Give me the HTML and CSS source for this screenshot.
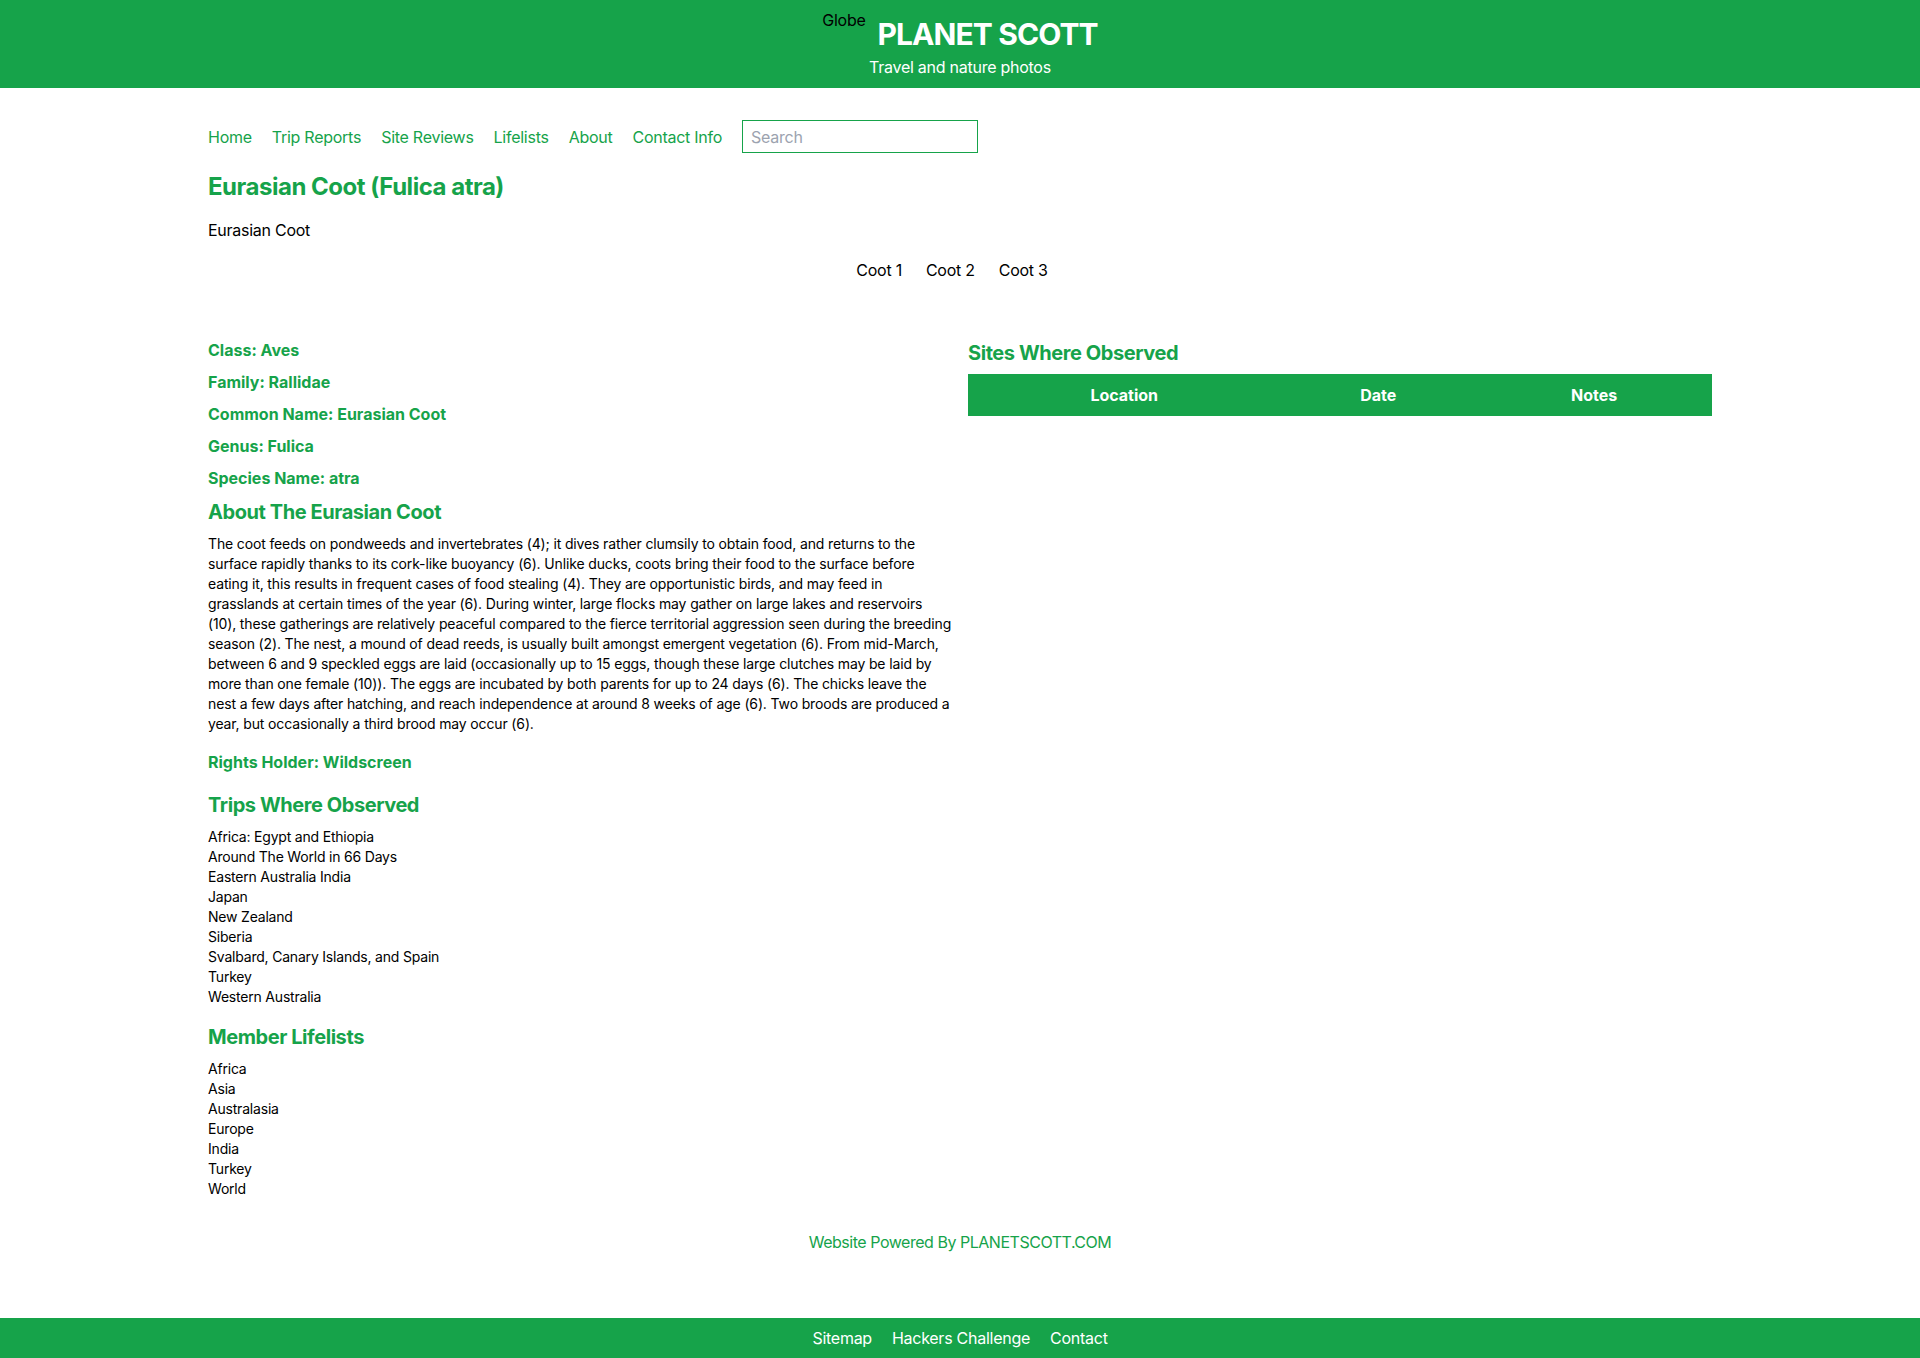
FILE: index.html
```html
<!DOCTYPE html>
<html lang="en">
<head>
<meta charset="utf-8">
<title>Eurasian Coot (Fulica atra) - Planet Scott</title>
<link rel="stylesheet" href="styles.css">
</head>
<body>
<header class="site-header">
  <div class="brand">
    <span class="globe">Globe</span>
    <h1 class="brand-title">PLANET SCOTT</h1>
  </div>
  <p class="tagline">Travel and nature photos</p>
</header>

<main class="container">
  <nav class="main-nav">
    <a href="#">Home</a>
    <a href="#">Trip Reports</a>
    <a href="#">Site Reviews</a>
    <a href="#">Lifelists</a>
    <a href="#">About</a>
    <a href="#">Contact Info</a>
    <input class="search" type="text" placeholder="Search">
  </nav>

  <h2 class="page-title">Eurasian Coot (Fulica atra)</h2>
  <p class="common">Eurasian Coot</p>

  <div class="photos">
    <span>Coot 1</span>
    <span>Coot 2</span>
    <span>Coot 3</span>
  </div>

  <div class="columns">
    <section class="left">
      <div class="facts">
        <p>Class: Aves</p>
        <p>Family: Rallidae</p>
        <p>Common Name: Eurasian Coot</p>
        <p>Genus: Fulica</p>
        <p>Species Name: atra</p>
      </div>
      <h3 class="sub">About The Eurasian Coot</h3>
      <p class="about">The coot feeds on pondweeds and invertebrates (4); it dives rather clumsily to obtain food, and returns to the surface rapidly thanks to its cork-like buoyancy (6). Unlike ducks, coots bring their food to the surface before eating it, this results in frequent cases of food stealing (4). They are opportunistic birds, and may feed in grasslands at certain times of the year (6). During winter, large flocks may gather on large lakes and reservoirs (10), these gatherings are relatively peaceful compared to the fierce territorial aggression seen during the breeding season (2). The nest, a mound of dead reeds, is usually built amongst emergent vegetation (6). From mid-March, between 6 and 9 speckled eggs are laid (occasionally up to 15 eggs, though these large clutches may be laid by more than one female (10)). The eggs are incubated by both parents for up to 24 days (6). The chicks leave the nest a few days after hatching, and reach independence at around 8 weeks of age (6). Two broods are produced a year, but occasionally a third brood may occur (6).</p>
      <p class="rights">Rights Holder: Wildscreen</p>

      <h3 class="sub trips-title">Trips Where Observed</h3>
      <ul class="plain-list">
        <li>Africa: Egypt and Ethiopia</li>
        <li>Around The World in 66 Days</li>
        <li>Eastern Australia India</li>
        <li>Japan</li>
        <li>New Zealand</li>
        <li>Siberia</li>
        <li>Svalbard, Canary Islands, and Spain</li>
        <li>Turkey</li>
        <li>Western Australia</li>
      </ul>

      <h3 class="sub lists-title">Member Lifelists</h3>
      <ul class="plain-list">
        <li>Africa</li>
        <li>Asia</li>
        <li>Australasia</li>
        <li>Europe</li>
        <li>India</li>
        <li>Turkey</li>
        <li>World</li>
      </ul>
    </section>

    <section class="right">
      <h3 class="sub">Sites Where Observed</h3>
      <table class="sites">
        <thead>
          <tr>
            <th class="col-loc">Location</th>
            <th class="col-date">Date</th>
            <th class="col-notes">Notes</th>
          </tr>
        </thead>
        <tbody></tbody>
      </table>
    </section>
  </div>

  <p class="powered">Website Powered By PLANETSCOTT.COM</p>
</main>

<footer class="site-footer">
  <a href="#">Sitemap</a>
  <a href="#">Hackers Challenge</a>
  <a href="#">Contact</a>
</footer>
</body>
</html>
```

FILE: styles.css
```css
* { box-sizing: border-box; }

html, body {
  margin: 0;
  padding: 0;
}

body {
  font-family: Inter, "Noto Sans", "Liberation Sans", sans-serif;
  font-size: 16px;
  line-height: 24px;
  letter-spacing: -0.26px;
  color: #000;
  background: #fff;
  min-height: 100vh;
  display: flex;
  flex-direction: column;
}

a { color: inherit; text-decoration: none; }

/* Header */
.site-header {
  background: #16a34a;
  color: #fff;
  padding: 8px 0 9px;
  text-align: center;
}

.brand {
  display: flex;
  justify-content: center;
  align-items: flex-start;
  gap: 12px;
}

.globe {
  color: #000;
  font-size: 16px;
  line-height: 24px;
}

.brand-title {
  margin: 8px 0 0;
  font-size: 30px;
  line-height: 36px;
  font-weight: 700;
  letter-spacing: -0.9px;
}

.tagline {
  margin: 3px 0 0;
  font-size: 16px;
  line-height: 24px;
}

/* Main */
.container {
  width: 100%;
  max-width: 1536px;
  margin: 0 auto;
  padding: 0 16px;
  flex: 1;
}

.main-nav {
  margin-top: 32px;
  display: flex;
  align-items: center;
  gap: 20px;
  color: #16a34a;
}

.search {
  width: 236px;
  height: 33px;
  border: 1px solid #16a34a;
  padding: 0 8px;
  font-family: inherit;
  font-size: 16px;
  letter-spacing: -0.26px;
  color: #111;
  outline: none;
}
.search::placeholder { color: #9ca3af; }

.page-title {
  margin: 18px 0 0;
  font-size: 24px;
  line-height: 32px;
  font-weight: 700;
  letter-spacing: -0.48px;
  color: #16a34a;
}

.common {
  margin: 15px 0 0;
}

.photos {
  margin-top: 16px;
  display: flex;
  justify-content: center;
  gap: 24px;
  padding-right: 16px;
}

.columns {
  margin-top: 56px;
  display: grid;
  grid-template-columns: 1fr 1fr;
  gap: 16px;
  align-items: start;
}

.right {
  padding-top: 1px;
}

.facts p {
  margin: 0 0 8px;
  font-weight: 700;
  letter-spacing: 0;
  color: #16a34a;
}

.sub {
  margin: 0;
  font-size: 20px;
  line-height: 28px;
  font-weight: 700;
  letter-spacing: -0.43px;
  color: #16a34a;
}

.about {
  margin: 8px 0 0;
  font-size: 14px;
  line-height: 20px;
  letter-spacing: -0.14px;
}

.rights {
  margin: 16px 0 0;
  font-weight: 700;
  letter-spacing: 0;
  color: #16a34a;
}

.trips-title { margin-top: 17px; }
.lists-title { margin-top: 16px; }

.plain-list {
  list-style: none;
  margin: 8px 0 0;
  padding: 0;
  font-size: 14px;
  line-height: 20px;
  letter-spacing: -0.2px;
}

.sites {
  margin-top: 7px;
  width: 100%;
  border-collapse: collapse;
}

.sites th {
  background: #16a34a;
  color: #fff;
  font-weight: 700;
  letter-spacing: 0;
  padding: 9px 8px;
  text-align: center;
}
.col-loc { width: 42%; }
.col-date { width: 26.3%; }
.col-notes { width: 31.7%; }

.powered {
  margin: 31px 0 0;
  text-align: center;
  color: #16a34a;
  letter-spacing: -0.47px;
}

/* Footer */
.site-footer {
  margin-top: 64px;
  background: #16a34a;
  color: #fff;
  height: 40px;
  display: flex;
  justify-content: center;
  align-items: center;
  gap: 20px;
}
```
